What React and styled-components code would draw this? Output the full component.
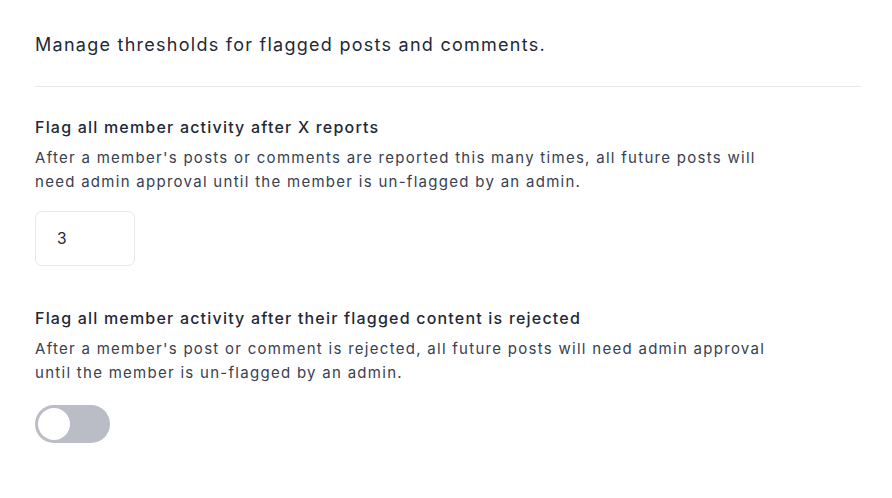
import React, { useState } from 'react'
import styled, { createGlobalStyle } from 'styled-components'

const GlobalStyle = createGlobalStyle`
    html, body {
        margin: 0;
        padding: 0;
        background: #ffffff;
    }
    body {
        font-family: Inter, "Noto Sans", "Liberation Sans", sans-serif;
        -webkit-font-smoothing: antialiased;
    }
`

const Page = styled.div`
    width: 892px;
    height: 498px;
    box-sizing: border-box;
    padding: 31px 31px 0 35px;
    background: #ffffff;
`

const Intro = styled.p`
    margin: 0;
    font-size: 18px;
    line-height: 28px;
    letter-spacing: 1.26px;
    color: #1f2937;
`

const Divider = styled.hr`
    margin: 27px 0 27px;
    border: none;
    border-top: 1px solid #e8e9ec;
`

const Section = styled.section`
    display: flex;
    flex-direction: column;
    align-items: flex-start;
    margin-bottom: ${p => p.gap || 0}px;
`

const Heading = styled.h3`
    margin: 0;
    font-size: 16px;
    line-height: 26px;
    font-weight: 500;
    letter-spacing: 1.2px;
    color: #1f2937;
`

const Description = styled.p`
    margin: 6px 0 0;
    font-size: 15px;
    line-height: 24px;
    letter-spacing: 1.28px;
    color: #374151;
`

const NumberInput = styled.input`
    margin-top: 17px;
    width: 100px;
    height: 55px;
    box-sizing: border-box;
    padding: 0 21px;
    border: 1px solid #e6e7ea;
    border-radius: 7px;
    font-family: inherit;
    font-size: 15.5px;
    color: #1f2937;
    outline: none;
`

const Toggle = styled.button`
    margin-top: 20px;
    width: 75px;
    height: 38px;
    padding: 3px;
    border: none;
    border-radius: 19px;
    background: ${p => (p.on ? '#4f46e5' : '#babdc5')};
    display: flex;
    justify-content: ${p => (p.on ? 'flex-end' : 'flex-start')};
    cursor: pointer;
`

const Knob = styled.span`
    width: 32px;
    height: 32px;
    border-radius: 50%;
    background: #ffffff;
`

function App() {
    const [reports, setReports] = useState('3')
    const [flagOnReject, setFlagOnReject] = useState(false)

    return (
        <Page>
            <GlobalStyle />
            <Intro>Manage thresholds for flagged posts and comments.</Intro>
            <Divider />
            <Section gap={39}>
                <Heading>Flag all member activity after X reports</Heading>
                <Description>
                    After a member's posts or comments are reported this many times, all future posts will
                    <br />
                    need admin approval until the member is un-flagged by an admin.
                </Description>
                <NumberInput value={reports} onChange={e => setReports(e.target.value)} />
            </Section>
            <Section>
                <Heading>Flag all member activity after their flagged content is rejected</Heading>
                <Description>
                    After a member's post or comment is rejected, all future posts will need admin approval
                    <br />
                    until the member is un-flagged by an admin.
                </Description>
                <Toggle on={flagOnReject ? 1 : 0} onClick={() => setFlagOnReject(!flagOnReject)}>
                    <Knob />
                </Toggle>
            </Section>
        </Page>
    )
}

export default App
